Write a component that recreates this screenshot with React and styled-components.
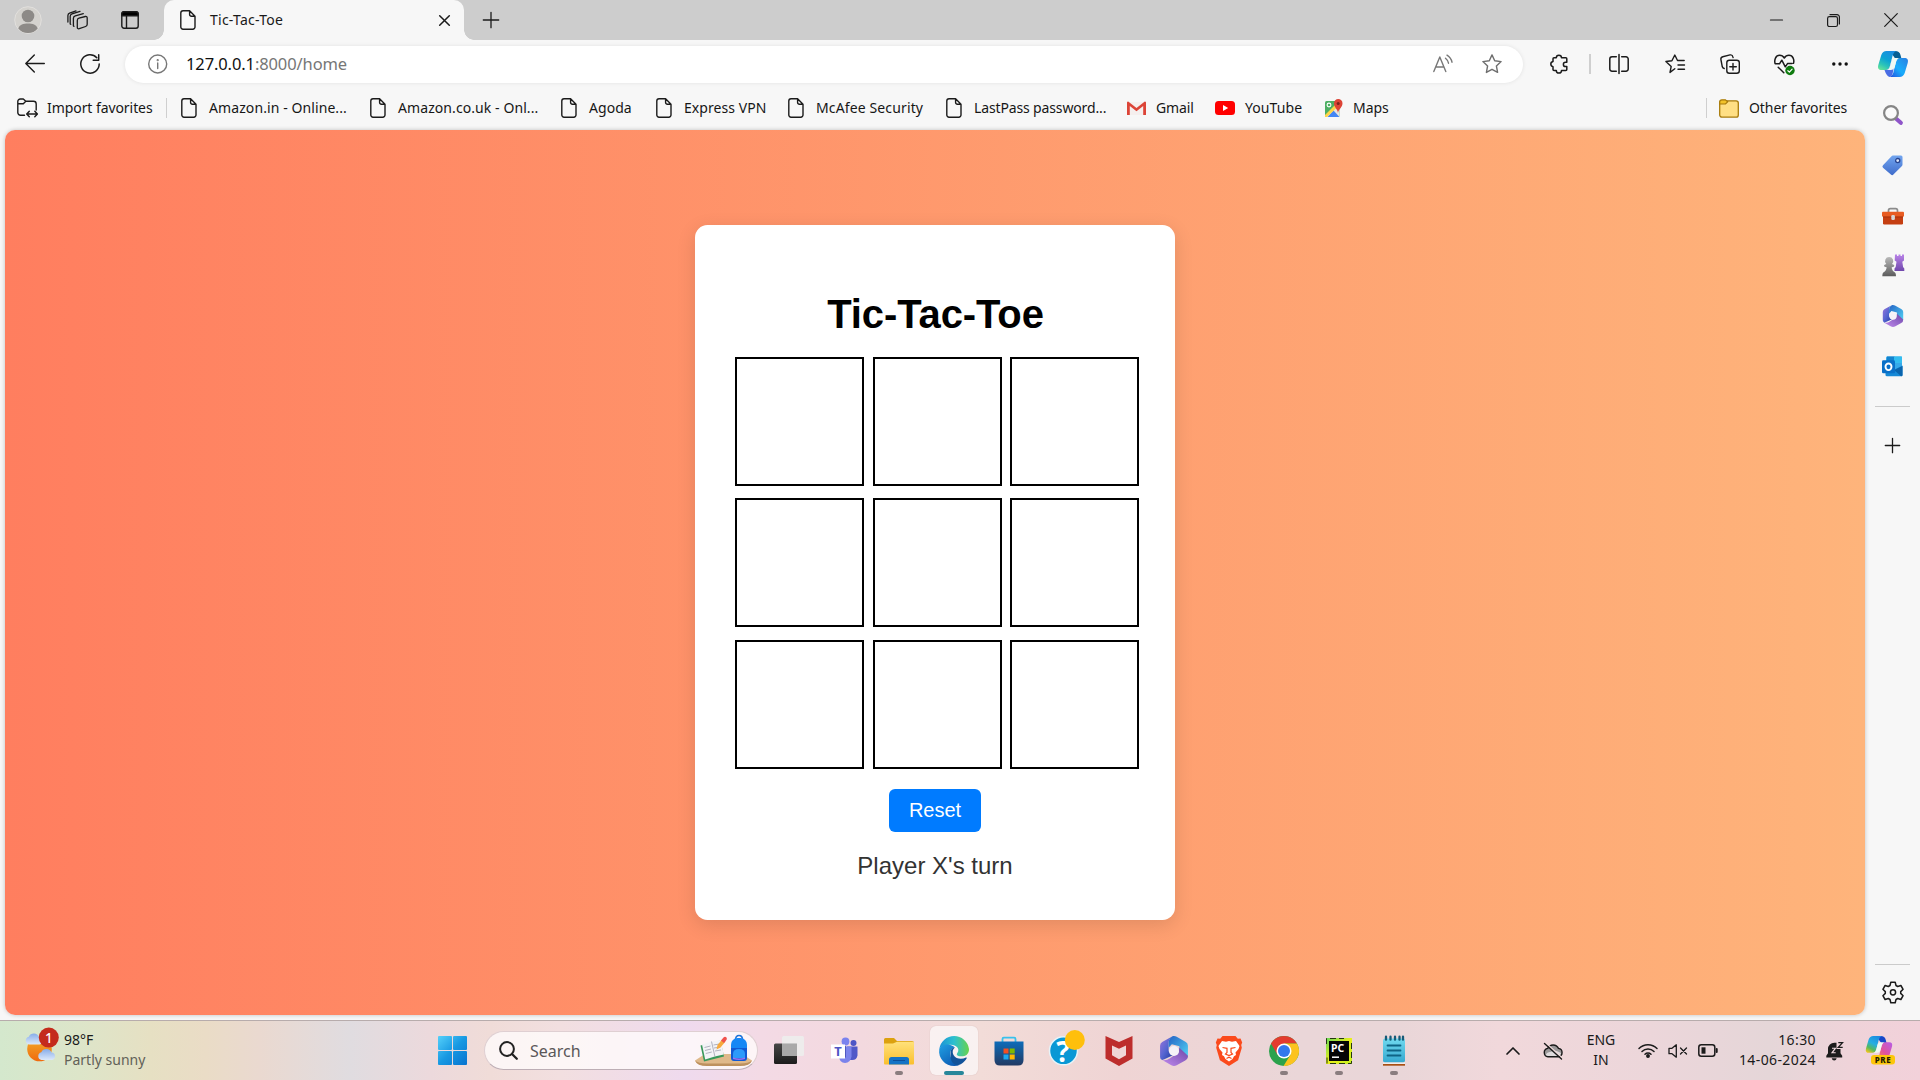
import React from "react";
import styled, { createGlobalStyle } from "styled-components";

const Global = createGlobalStyle`
  * { box-sizing: border-box; }
  body { margin: 0; overflow: hidden; font-family: "Noto Sans", "Open Sans", sans-serif; color: #1a1a1a; }
  svg { display: block; flex: none; overflow: visible; }
`;

/* ---------- layout parts ---------- */
const Desktop = styled.div`
  width: 1920px; height: 1080px; display: flex; flex-direction: column; background: #f7f7f7;
`;
const TabStrip = styled.header`
  height: 40px; flex: none; display: flex; align-items: center; background: #cdcdcd;
`;
const Slot = styled.div`
  width: ${(p) => p.$w}px; height: 100%; flex: none; display: flex; align-items: center; justify-content: center;
`;
const StripStart = styled.div`
  width: 164px; height: 100%; display: flex; padding-left: 2px;
`;
const Tab = styled.div`
  position: relative; width: 300px; height: 40px; display: flex; align-items: center; background: #f7f7f7;
  border-radius: 10px 10px 0 0; padding: 0 14px 0 16px;
  &::before, &::after {
    content: ""; position: absolute; bottom: 0; width: 10px; height: 10px;
  }
  &::before { left: -10px; background: radial-gradient(circle at 0 0, transparent 9.5px, #f7f7f7 10px); }
  &::after { right: -10px; background: radial-gradient(circle at 100% 0, transparent 9.5px, #f7f7f7 10px); }
`;
const TabTitle = styled.span`
  flex: 1; margin-left: 14px; font-size: 14px; letter-spacing: ${(p) => p.$ls || 0}px; line-height: 20px;
`;
const Spacer = styled.div`flex: 1;`;
const Body = styled.div`flex: 1; display: flex; min-height: 0;`;
const MainColumn = styled.div`
  width: 1866px; display: flex; flex-direction: column; padding: 0 1px 5px 5px;
`;
const Toolbar = styled.div`
  height: 48px; display: flex; align-items: center; margin-left: -5px;
`;
const NavButtons = styled.div`width: 125px; flex: none; height: 100%; display: flex; padding-left: 7px;`;
const AddressBar = styled.div`
  width: 1398px; flex: none; height: 37px; border-radius: 19px; background: #fff; display: flex; align-items: center;
  box-shadow: 0 0 4px rgba(0,0,0,.09); padding: 0 7px 0 8px;
`;
const Url = styled.div`
  flex: 1; font-size: 16.5px; letter-spacing: ${(p) => p.$ls}px; color: #767676; margin-left: 4px; line-height: 24px;
  b { font-weight: 400; color: #111; }
`;
const Tools = styled.div`display: flex; flex: none; height: 100%; padding-left: 9px;`;
const VLine = styled.i`width: 1.5px; height: 20px; background: #cfcfcf; flex: none;`;
const Favorites = styled.nav`
  height: 42px; display: flex; align-items: center; padding: 0 17px 2px 12px;
`;
const Favorite = styled.div`
  width: ${(p) => p.$w}px; flex: none; display: flex; align-items: center; gap: 10px;
  font-size: 14px; line-height: 20px; white-space: nowrap; color: #161616;
  span { letter-spacing: ${(p) => p.$ls || 0}px; }
`;
const IconBox = styled.div`
  width: 20px; height: 22px; flex: none; display: flex; align-items: center; justify-content: center;
`;
const Page = styled.main`
  flex: 1; display: flex; align-items: center; justify-content: center; border-radius: 10px;
  background: linear-gradient(to right, #ff7e5f, #feb47b); box-shadow: 0 0 4px rgba(0,0,0,.22);
  font-family: "Liberation Sans", Arial, sans-serif;
`;
const GameCard = styled.section`
  width: 480px; height: 695px; border-radius: 12.5px; background: #fff; padding: 66px 36px 0 40px;
  box-shadow: 0 5px 19px rgba(0,0,0,.12); display: flex; flex-direction: column; align-items: center;
`;
const GameTitle = styled.h1`
  margin: 0 0 20px -3px; font-size: 40px; line-height: 46px; font-weight: 700; letter-spacing: -.1px; color: #000;
`;
const Board = styled.div`
  display: grid; grid-template: repeat(3, 129px) / repeat(3, 129px); column-gap: 8.5px; row-gap: 12.4px;
`;
const Cell = styled.div`border: 2px solid #000;`;
const ResetButton = styled.button`
  margin: 20px 0 0 -4px; width: 92px; height: 43px; border: 0; border-radius: 6px; background: #007bff; color: #fff;
  font: 20px/23px "Liberation Sans", Arial, sans-serif; padding: 0;
`;
const Status = styled.p`margin: 20px 0 0 -4px; font-size: 24px; line-height: 28px; color: #333;`;

const Sidebar = styled.aside`
  width: 54px; display: flex; flex-direction: column; align-items: center; padding-right: 1px;
`;
const SideItem = styled.div`
  height: ${(p) => p.$h || 50.2}px; flex: none; display: flex; align-items: center; justify-content: center;
  padding-bottom: ${(p) => p.$lift || 0}px;
`;
const SideRule = styled.i`width: 35px; height: 1px; background: #cbcbcb; flex: none;`;

const Taskbar = styled.footer`
  height: 60px; flex: none; display: flex; border-top: 1px solid #b7acac;
  background: linear-gradient(to right, #d4e8cd 0, #dde5c9 80px, #e6e0c3 150px, #eadcc6 205px, #ead9d0 260px,
    #e0dce0 350px, #ecd9dc 430px, #f0dcd8 490px, #f2dfe0 560px, #efdaee 685px, #f3dae5 760px, #f3d9df 860px,
    #f2dcd8 980px, #efd4d4 1120px, #ead6d8 1300px, #e9d6d8 1400px, #f1d8db 1500px, #ecd6da 1650px,
    #e5d6d8 1770px, #efd3d9 1850px, #f2d1da 1920px);
`;
const Weather = styled.div`width: 438px; display: flex; padding-left: 24px;`;
const WeatherIcon = styled.div`width: 40px; padding-top: 4px;`;
const Lines = styled.div`
  display: flex; flex-direction: column; font-size: 14px; line-height: 20px; padding-top: 9px; white-space: nowrap;
  width: ${(p) => p.$w || "auto"}; align-items: ${(p) => p.$align || "flex-start"}; letter-spacing: ${(p) => p.$ls || 0}px;
  flex: none;
`;
const Muted = styled.span`color: #626158;`;
const SearchBox = styled.div`
  width: 274px; height: 39px; margin: 10px 0 0 17px; border-radius: 20px; background: rgba(255,251,251,.8);
  border: 1px solid #dfcfd2; border-bottom-color: #bdaeb5; display: flex; align-items: center; padding: 0 5px 0 14px;
  font-size: 16px; color: #5b5759; letter-spacing: 0;
  span { flex: 1; margin-left: 12px; }
`;
const Apps = styled.div`display: flex; width: 661px; margin-left: 3px;`;
const AppSlot = styled.div`
  width: 55px; flex: none; display: flex; flex-direction: column; align-items: center; padding-top: 5px;
`;
const Tile = styled.div`
  width: 48px; height: 49px; border-radius: 6px; display: flex; flex-direction: column; align-items: center;
  justify-content: flex-end; background: ${(p) => (p.$on ? "rgba(250,244,244,.85)" : "none")};
  box-shadow: ${(p) => (p.$on ? "0 0 1px rgba(120,90,90,.35)" : "none")};
`;
const Glyph = styled.div`width: 30px; height: 30px; margin-bottom: 5px;`;
const Mark = styled.i`
  width: ${(p) => (p.$s === "on" ? 20 : 8)}px; height: 4px; border-radius: 2px; flex: none;
  background: ${(p) => (p.$s === "on" ? "#27879a" : p.$s ? "#8a7d7f" : "transparent")};
`;
const Tray = styled.div`display: flex; flex: 1; padding-left: 71px;`;

/* ---------- icons ---------- */
const Svg = ({ w = 20, h = w, children, ...r }) => (
  <svg width={w} height={h} viewBox={`0 0 ${w} ${h}`} fill="none" stroke="none" {...r}>{children}</svg>
);
const Line = ({ w = 20, h, c = "#1b1b1b", sw = 1.4, children }) => (
  <Svg w={w} h={h || w} stroke={c} strokeWidth={sw} strokeLinecap="round" strokeLinejoin="round">{children}</Svg>
);
const Doc = () => (
  <Line w={16} h={20}><path d="M3 .8h6.6l5.4 5.4V17a2.2 2.2 0 0 1-2.2 2.2H3A2.2 2.2 0 0 1 .8 17V3A2.2 2.2 0 0 1 3 .8zM9.6 1v3.4a1.8 1.8 0 0 0 1.8 1.8H15" /></Line>
);
const Avatar = () => (
  <Svg w={28}><circle cx="14" cy="14" r="13.3" fill="#d4d2ce" stroke="#e2e0dd" /><circle cx="14" cy="10" r="6.3" fill="#8d8a87" /><path d="M4.3 22.5C5.5 18.500 9.500 17.500 14 17.500s8.500 1 9.700 5A12.500 12.500 0 0 1 14 27a12.500 12.500 0 0 1-9.700-4.500z" fill="#8d8a87" /></Svg>
);
const Workspaces = () => (
  <Line w={21} h={20} sw={1.3}><path d="M12 8.200l6.300-1.700q1.900-.4 1.900 1.500v6.300q0 1.700-1.600 2.200l-6.300 2.200q-2 .5-2-1.500v-6.700q0-1.800 1.700-2.300zM7 16.300l-.6-.3V8.300a2.600 2.600 0 0 1 1.900-2.500L16.300 3.600M3.700 14.300l-.5-.3V6.300a2.600 2.600 0 0 1 1.800-2.500L13 1.300M.9 12V5.500a2.600 2.600 0 0 1 1.700-2.300L9 .9" /></Line>
);
const TabActions = () => (
  <Line w={18}><rect x=".8" y=".8" width="16.4" height="16.400" rx="2.200" /><path d="M.8 4.800V3A2.200 2.200 0 0 1 3 .8h12a2.200 2.200 0 0 1 2.200 2.200v1.800z" fill="#000" /><path d="M5.500 5.500v11.500" /></Line>
);
const Cross = ({ s = 11, sw = 1.5 }) => <Line w={s} sw={sw}><path d={`M.7 .7L${s - 0.7} ${s - 0.7}M${s - 0.7} .7L.7 ${s - 0.7}`} /></Line>;
const Plus = ({ s = 16 }) => <Line w={s} sw={1.3}><path d={`M${s / 2} .3v${s - 0.6}M.3 ${s / 2}h${s - 0.6}`} /></Line>;
const Minimize = () => <Line w={13} h={13} sw={1.2}><path d="M.5 6h12" /></Line>;
const Restore = () => <Line w={13} sw={1.2}><rect x=".6" y="2.600" width="9.900" height="9.900" rx="1.800" /><path d="M3 .6h7a2.400 2.400 0 0 1 2.400 2.400v7" /></Line>;
const Back = () => <Line w={20} sw={1.4}><path d="M19.300 9.500H1M9.300 1L.8 9.500l8.500 8.500" /></Line>;
const Refresh = () => <Line w={20} sw={1.5}><path d="M19.200 10A9.200 9.200 0 1 1 16.800 3.800M18.700 .8v5.500h-5.500" /></Line>;
const Info = () => <Line w={20} c="#777" sw={1.4}><circle cx="9.700" cy="10" r="9" /><path d="M9.700 9v5.500" /><circle cx="9.700" cy="6.200" r=".4" fill="#777" /></Line>;
const ReadAloud = () => <Line w={20} c="#777" sw={1.4}><path d="M.8 17.500L6.800 3l6 14.500M2.800 13h8M12.500 4.200a8 8 0 0 1 3 5M14 1.200a11 11 0 0 1 5 7" /></Line>;
const starPath = "M10 .9l2.700 5.900 6.400.8-4.700 4.400 1.200 6.400L10 15.300l-5.600 3.100 1.200-6.400L.9 7.600l6.400-.8z";
const StarIcon = () => <Line w={20} c="#6f6f6f" sw={1.4}><path d={starPath} /></Line>;
const Puzzle = () => <Line w={20} sw={1.500}><path d="M5 3.800h2.300a2.600 2.600 0 0 1 5.200 0h4.300q1 0 1 1v3.500h-1.300a2.100 2.100 0 0 0 0 4.200h1.300v3q0 1-1 1h-4.300a2.600 2.600 0 0 1-5.200 0H5q-1 0-1-1v-2.800a2.700 2.700 0 0 1 0-5.300V4.800q0-1 1-1z" /></Line>;
const Split = () => <Line w={20} sw={1.500}><path d="M7.300 2.800H3A2.200 2.200 0 0 0 .8 5v10A2.200 2.200 0 0 0 3 17.200h4.300M12.700 2.800H17A2.200 2.200 0 0 1 19.200 5v10a2.200 2.200 0 0 1-2.200 2.200h-4.300M10 .5v19" /></Line>;
const FavList = () => <Line w={20} sw={1.400}><path d="M9.800 14.700L5 18.400l1.200-6L.9 7.500l6-.8L9.800 1l2.700 5.500h6.700M13 11h6.500M13 15.300h6.500" /></Line>;
const Collections = () => <Line w={20} sw={1.400}><rect x="6.800" y="6.200" width="12.500" height="13" rx="2.500" /><path d="M13 9.500v6.500M9.800 12.700h6.500M4.200 14.500a2.500 2.500 0 0 1-1.900-1.700L.9 5.500A2.500 2.500 0 0 1 2.800 2.700L10 .9a2.500 2.500 0 0 1 2.900 2l.2.600" /></Line>;
const Heart = () => (
  <Line w={21} h={21} sw={1.500}><path d="M1 9.300C.2 6 1.500 1.300 5.600 1.300c2.300 0 3.800 1.200 4.700 2.700.9-1.500 2.400-2.700 4.700-2.700 4.100 0 5.500 4.700 4.500 8M1.200 9.800h4.300l2.300-3.600 3.500 6.600 2.200-3.200H18M4.200 13.200l5.600 5.600" /><circle cx="16" cy="16.500" r="4.700" fill="#0f7b0f" stroke="none" /><path d="M13.900 16.700l1.500 1.400 2.700-3" stroke="#fff" strokeWidth="1.200" /></Line>
);
const Dots = () => <Svg w={18} h={4} fill="#111"><circle cx="2.800" cy="2" r="1.700" /><circle cx="9" cy="2" r="1.700" /><circle cx="15.200" cy="2" r="1.700" /></Svg>;
const ImportFolder = () => <Line w={21} h={20} sw={1.400}><path d="M7.500 17.200H3.500A2.700 2.700 0 0 1 .8 14.500v-11A2.500 2.500 0 0 1 3.300 1h3l2.500 2.300h7.700a2.700 2.700 0 0 1 2.700 2.700v6M.8 5.800h5.500l2.500-2.500M10 16h10M12.300 13.200L9.700 16l2.600 2.800M17.800 13.200l2.600 2.800-2.600 2.800" /></Line>;
const Gmail = () => <Svg w={19} h={15}><path d="M1 1h17v13H1z" fill="#f5efee" /><path d="M0 1.500Q0 .5 1.200 .5L9.500 7 17.800 .5Q19 .5 19 1.500V14h-2.800V5L9.500 10.300 2.800 5v9H0z" fill="#dc4437" /></Svg>;
const YouTube = () => <Svg w={20} h={14}><rect width="20" height="14" rx="3.500" fill="#f00" /><path d="M8 4v6l5.200-3z" fill="#fff" /></Svg>;
const Maps = () => <Svg w={19} h={18}><rect x="1" y="2" width="14.500" height="16" rx="1.500" fill="#4cae62" /><path d="M1 17L15.500 3v15H2z" fill="#e9e5df" /><path d="M3.500 18L9.500 11.500 15.500 18z" fill="#4486f4" /><path d="M1 16L12.500 4.500l2 2.500L3 18H1z" fill="#fdd548" /><circle cx="5" cy="6" r="1.900" stroke="#fff" strokeWidth="1.100" /><path d="M14 14C13.600 10 10 8.500 10 4.300a4.200 4.200 0 0 1 8.500 0C18.500 8.500 14.600 10 14 14z" fill="#dc4335" /><circle cx="14.200" cy="4.400" r="1.500" fill="#7b231e" /></Svg>;
const Folder = () => <Svg w={20} h={19}><rect x=".7" y="1.800" width="18.600" height="16.300" rx="2.200" fill="#ffdf84" stroke="#a87b0b" strokeWidth="1.300" /><path d="M.7 5V3A2.200 2.200 0 0 1 2.900 .8h3.500L8.700 2.800 6.500 5z" fill="#f2c229" stroke="#a87b0b" strokeWidth="1.200" /></Svg>;

const Copilot = ({ w = 30, h = 26, pre }) => (
  <svg width={w} height={h} viewBox="0 0 30 26" fill="none">
    <defs>
      <linearGradient id={pre ? "ca1" : "ca"} x1=".7" y1="0" x2=".2" y2="1"><stop stopColor="#1b8ce0" /><stop offset=".45" stopColor={pre ? "#25aee2" : "#0ca3d4"} /><stop offset=".75" stopColor={pre ? "#54b95e" : "#2cc4b8"} /><stop offset="1" stopColor={pre ? "#e9c51f" : "#63e29a"} /></linearGradient>
      <linearGradient id={pre ? "cb1" : "cb"} x1="1" y1="0" x2="0" y2="1"><stop stopColor={pre ? "#b65ee8" : "#2b7ee0"} /><stop offset=".55" stopColor={pre ? "#e0529c" : "#18aefc"} /><stop offset="1" stopColor={pre ? "#f6914a" : "#2250df"} /></linearGradient>
    </defs>
    <path d="M17 0q4.600 0 5.500 4l1 4h-6l-5-7z" fill={pre ? "#1746c8" : "#075f93"} />
    <path d="M8.500 0H18q-2.500 1.300-3.300 4.200L12 15q-1 4-4.300 4H3.500C.7 19-.6 17.300.3 14L3.300 4Q4.700 0 8.500 0z" fill={`url(#${pre ? "ca1" : "ca"})`} />
    <path d="M21.500 26H12q2.500-1.300 3.300-4.200L18 11q1-4 4.300-4h4.200c2.800 0 4.100 1.700 3.200 5l-3 10q-1.400 4-5.200 4z" fill={`url(#${pre ? "cb1" : "cb"})`} />
    {!pre && <path d="M6.500 19h1.200q3.300 0 4.300-4l1.600-6H17l-2 12q-1 4.800-3.500 5Q8.500 25 6.500 19z" fill="#2b55e0" opacity=".85" />}
    <path d="M16.500 7h5q-2.700.5-3.500 4l-1.300 5q-1 3-4 3h-4q2.500-.5 3.300-4l1.300-5q.8-3 3.200-3z" fill="#effaf4" />
  </svg>
);
const SideSearch = () => <Svg w={20}><path d="M13.500 14l4.300 3.800" stroke="#8f55c9" strokeWidth="4.200" strokeLinecap="round" /><circle cx="8" cy="8" r="6.900" stroke="#858585" strokeWidth="2.200" fill="#fafafa" /></Svg>;
const Tag = () => <Svg w={21}><defs><linearGradient id="tg" x2="0" y2="1"><stop stopColor="#72a5ef" /><stop offset="1" stopColor="#3f6ccb" /></linearGradient></defs><path d="M11 .5h8q1.500 0 1.500 1.500v7.500q0 1-.8 1.800l-8.300 8.300q-1.200 1.200-2.500 0L1 12.700q-1.200-1.300 0-2.500L9.300 1.500q.7-1 1.700-1z" fill="url(#tg)" /><circle cx="15.700" cy="5.600" r="2.100" fill="#dce7fb" stroke="#27438f" strokeWidth="1.300" /></Svg>;
const Toolbox = () => <Svg w={22} h={18}><g transform="translate(0 1.500)"><path d="M6.500 5V3q0-1.800 1.800-1.800h5.400Q15.500 1.200 15.500 3v2" stroke="#8b8b8b" strokeWidth="1.700" /><rect x="1" y="6" width="20" height="11" rx="1.200" fill="#c53f12" /><rect x="0" y="4.200" width="22" height="5" rx="1" fill="#e85c22" /><path d="M1 9h20v1H1z" fill="#a7320d" /><rect x="9.300" y="7.500" width="3.600" height="5" rx="1.200" fill="#d6d6d6" /></g></Svg>;
const Chess = () => <Svg w={22} h={23}><defs><linearGradient id="pw" x2="0" y2="1"><stop stopColor="#b9b9b9" /><stop offset="1" stopColor="#5c5c5c" /></linearGradient><linearGradient id="rk" x2="0" y2="1"><stop stopColor="#b983e8" /><stop offset="1" stopColor="#7048ac" /></linearGradient></defs><path d="M13 .5h2v1.500h1.500V.5h2v1.500H20V.5h2v6l-1.700 1.300.8 5.200 1.200 1.500V17h-9.800v-2.500l1.200-1.500.8-5.200L12.700 6.500z" fill="url(#rk)" /><path d="M7.200 3a4 4 0 0 1 2.800 6.900l1.700.8q1.300 1.200 0 2l-2 .6q0 3.300 3.300 5.200 1 .7 1 3.800H.3q0-3.100 1-3.800 3.300-1.900 3.300-5.200l-2-.6q-1.300-.8 0-2l1.700-.8A4 4 0 0 1 7.200 3z" fill="url(#pw)" /></Svg>;
const M365 = ({ s = 22, id }) => (
  <svg width={s} height={s} viewBox="0 0 26 28" fill="none">
    <defs><linearGradient id={id + "a"} x2="1" y2="1"><stop stopColor="#9d72d9" /><stop offset=".5" stopColor="#5766d2" /><stop offset="1" stopColor="#1f3a9f" /></linearGradient><linearGradient id={id + "b"} x2="1" y2="1"><stop stopColor="#2563c5" /><stop offset="1" stopColor="#52d4f5" /></linearGradient><linearGradient id={id + "c"} x1="1" y1="0" x2="0" y2="1"><stop stopColor="#6d47a9" /><stop offset="1" stopColor="#c18bed" /></linearGradient></defs>
    <path d="M12 0L2 5.500Q0 6.700 0 9v10.500q0 2 2 3L4 21.600l8-3.600-4-3.700V6.800Q8 2 12 0z" fill={`url(#${id}a)`} />
    <path d="M12 0q2-.3 3.500.6L24 5.500q2 1.200 2 3.500v9.500q0 .8-.4 1.500L18 15V9.500L11 7.700 8 11V6.500Q8 2 12 0z" fill={`url(#${id}b)`} />
    <path d="M2 22.500q4 .8 7-1.500l8-5.500 1-4.500 8 7.500q.2 3-2.500 4.300l-8 4.600q-2.500 1.200-5 0z" fill={`url(#${id}c)`} />
    <circle cx="13" cy="14" r="4.700" fill="#f6f2f8" />
  </svg>
);
const Outlook = () => <Svg w={21}><rect x="4" y=".5" width="16" height="13" rx="1.200" fill="#36a9ea" /><path d="M5 .5h7.500V7H5z" fill="#1384cf" /><path d="M12 .5h8V7h-8z" fill="#33bdf0" /><path d="M3.500 9.500L12 14l8.500-4.500V19q0 1.300-1.300 1.300H5q-1.500 0-1.500-1.300z" fill="#1689d6" /><path d="M20.500 10v9q0 1.300-1.300 1.300L12 14z" fill="#0a64ad" /><rect x="0" y="4.300" width="13" height="13" rx="1.300" fill="#0a70c8" /><ellipse cx="6.500" cy="10.800" rx="3" ry="3.300" stroke="#fff" strokeWidth="1.900" /></Svg>;
const Gear = () => <Line w={22} sw={1.500}><path d="M8.800 1.200h4.400l.8 3.300 1.700 1 3.200-1 2.200 3.800-2.400 2.300v1.800l2.400 2.300-2.200 3.800-3.200-1-1.700 1-.8 3.300H8.800L8 18.500l-1.700-1-3.200 1-2.200-3.800 2.400-2.300v-1.800L.9 8.300l2.200-3.800 3.200 1 1.700-1z" /><circle cx="11" cy="11.300" r="2.600" /></Line>;

const cloud = "M4 12a4 4 0 0 1-.2-7.800A5.500 5.500 0 0 1 14 4.500 3.800 3.800 0 0 1 14.500 12z";
const WeatherArt = () => (
  <Svg w={36} h={38}><defs><linearGradient id="sun" x2="0" y2="1"><stop stopColor="#f3ae2c" /><stop offset="1" stopColor="#f06a0d" /></linearGradient><linearGradient id="cl" x2="0" y2="1"><stop stopColor="#86ace9" /><stop offset="1" stopColor="#dce9fb" /></linearGradient></defs>
    <circle cx="15.500" cy="24" r="12.300" fill="url(#sun)" /><path d={cloud} transform="translate(1 7.500)" fill="url(#cl)" /><path d={cloud} transform="translate(13.500 23)" fill="url(#cl)" />
    <circle cx="24.800" cy="12.600" r="10" fill="#c42b1c" /><text x="24.800" y="17.600" fontSize="13.500" textAnchor="middle" fill="#fff" fontFamily="Noto Sans" fontWeight="500">1</text></Svg>
);
const StartIcon = () => <Svg w={29}><defs><linearGradient id="st" gradientUnits="userSpaceOnUse" x2="29" y2="29"><stop stopColor="#55d0fa" /><stop offset=".5" stopColor="#1798e2" /><stop offset="1" stopColor="#0873cf" /></linearGradient></defs><g fill="url(#st)"><rect width="14" height="14" rx="1" /><rect x="15" width="14" height="14" rx="1" /><rect y="15" width="14" height="14" rx="1" /><rect x="15" y="15" width="14" height="14" rx="1" /></g></Svg>;
const SearchIcon = () => <Svg w={19}><circle cx="8" cy="8" r="6.900" stroke="#222" strokeWidth="2" /><path d="M13 13l4.800 4.800" stroke="#222" strokeWidth="2.300" strokeLinecap="round" /></Svg>;
const StudyArt = () => (
  <Svg w={57} h={32}><path d="M0 25.500l10-6.500h37l10 6.500q-2 5-12 5H12Q2 30.500 0 25.500z" fill="#dfb98b" /><path d="M0 25.500q3 3 12 3h33q9 0 12-3-2 5.500-12 5.500H12Q2 31 0 25.500z" fill="#bd915f" />
    <path d="M5.500 10.500l20-5 3.500 16L9 26.500z" fill="#38985a" /><path d="M7 9.500l9.500-3 9.500-1.500 2.700 14.500-9 2-9.500 3z" fill="#f3f3f6" /><path d="M16.500 6.500l3.400 15M9.500 12.500l6-1.500M10 15.500l6-1.500M10.800 18.500l6-1.500M18.500 10l6-1M19 13l6-1M20 16l6-1" stroke="#a9aab8" strokeWidth=".9" />
    <path d="M21.500 14.500l1-4.500 5-6 3 2.500-5 6z" fill="#f6a93d" /><path d="M26 5.500l2.500-3q1.500-1.500 3 0 1 1.500-.3 2.700L29 8z" fill="#f0524d" />
    <path d="M40.500 5q0-4.500 3.500-4.500T47.500 5" stroke="#1e74d8" strokeWidth="1.600" /><rect x="36" y="3" width="16" height="23" rx="6.500" fill="#1687f5" /><path d="M36 13h16v10q0 3-3 3H39q-3 0-3-3z" fill="#1159d4" /><path d="M38 19q0-5 6-5t6 5v4H38z" fill="#2d9afa" /><path d="M38 22.500q6 2 12 0v1.500q-6 2-12 0z" fill="#9c6ff0" /></Svg>
);
const TaskView = () => <Svg w={30} h={28}><defs><linearGradient id="tv" x2="0" y2="1"><stop stopColor="#464646" /><stop offset="1" stopColor="#1c1c1c" /></linearGradient></defs><rect x="0" y="7.500" width="23" height="20.500" rx="1.500" fill="url(#tv)" /><rect x="8" y="0" width="22" height="20" rx="1.500" fill="#ededed" opacity=".93" /><rect x="8" y="7.500" width="15" height="12.500" fill="#a9a9a9" /></Svg>;
const Teams = () => <Svg w={30}><circle cx="24.500" cy="7" r="3" fill="#4d55c6" /><path d="M18 10.500h10.500v9q-1 5-6 4.500h-4z" fill="#5058c8" /><circle cx="16.500" cy="5.500" r="3.900" fill="#7a82ee" /><path d="M10 10.500h12.500v10q-1 6.500-6.500 6.500T10 20.500z" fill="#7b83eb" /><path d="M10 10h7v11.500h-6.500z" fill="#454db5" opacity=".8" /><rect x="2" y="8.500" width="14" height="14" fill="#fff" /><text x="9.100" y="20.200" fontFamily="Noto Sans" fontWeight="700" fontSize="13" textAnchor="middle" fill="#4f57c4">T</text></Svg>;
const Explorer = () => <Svg w={30}><defs><linearGradient id="ex" x2="0" y2="1"><stop stopColor="#ffe17b" /><stop offset="1" stopColor="#fabf2d" /></linearGradient></defs><path d="M0 3.500Q0 2 1.500 2h8.500l3 3h15q2 0 2 2v5H0z" fill="#dca10f" /><path d="M0 7.500h9l4-1.700h16q1 0 1 1V27.500q0 1-1 1H1q-1 0-1-1z" fill="url(#ex)" /><path d="M5 28.500v-5q0-2.500 2.500-2.500h15q2.500 0 2.500 2.500v5z" fill="#1473c5" /><path d="M9 24.500h12" stroke="#0c4f99" /></Svg>;
const Edge = () => <Svg w={30}><defs><linearGradient id="e1" x2="1"><stop stopColor="#1b92d5" /><stop offset=".5" stopColor="#2dc0cf" /><stop offset="1" stopColor="#68d34c" /></linearGradient><linearGradient id="e2" x2=".7" y2="1"><stop stopColor="#20a0e3" /><stop offset="1" stopColor="#0d5bb4" /></linearGradient></defs><path d="M.3 13A15 15 0 0 1 30 13c.3 5.500-4 7.500-8 7.300-4 0-5-1.700-3.500-3.500 3-4.500-2-8.600-7.500-8.100C5.500 9 1 10.500.3 13z" fill="url(#e1)" /><path d="M.3 13C1.500 9 7 7.800 10.500 8.800c3.500.7 5 2.500 5 2.500-4 1.500-5.500 6-3.500 10.500 1.500 4 5.500 7.300 8.500 7.300C10 33-1.500 24.500.3 13z" fill="url(#e2)" /><path d="M11.500 17.500c0-4 2-6 4.500-6.200-2.500 2-3 5-1.500 7.700C17 23 22.500 24 27 21.500q1-.3.700.8C25 27 20.800 29 18.500 29.300c-6-.8-7.500-7-7-11.800z" fill="#12539a" /></Svg>;
const Store = () => <Svg w={30}><defs><linearGradient id="ms" x2="0" y2="1"><stop stopColor="#0d6cb9" /><stop offset="1" stopColor="#223a63" /></linearGradient></defs><path d="M8.500 7V3q0-1.300 1.300-1.300h10.400Q21.500 1.700 21.500 3v4" stroke="#37c1ed" strokeWidth="1.800" /><path d="M.5 5.500h29V24q0 5.500-5.500 5.500H6Q.5 29.500.5 24z" fill="url(#ms)" /><path d="M9.500 12.500h5v5h-5z" fill="#f25022" /><path d="M15.700 12.500h5v5h-5z" fill="#7fba00" /><path d="M9.500 18.500h5v5h-5z" fill="#1ba9f0" /><path d="M15.700 18.500h5v5h-5z" fill="#ffb900" /></Svg>;
const Help = () => <Svg w={30}><circle cx="14.500" cy="14.800" r="14" fill="#0a98d5" stroke="#e7f3f8" strokeWidth="1.500" /><text x="14" y="25.500" fontFamily="Noto Sans" fontWeight="700" fontSize="28" textAnchor="middle" fill="#fff">?</text><circle cx="25.800" cy="4" r="10" fill="#ffbf0c" /></Svg>;
const McAfee = () => <Svg w={30}><path d="M1.500 0L15 6 28.500 0v22.500L15 30 1.500 22.500z" fill="#bd2d2c" /><path d="M8 9.500l7 3.200 7-3.200v9.800l-7 4-7-4z" fill="#efd6d6" /></Svg>;
const Brave = () => <Svg w={30}><path d="M8.500 0h13l2.300 2.800 2.700-.2 1.700 4-1 2.500.6 2.700-3.700 12.500L15 30 5.900 24.300 2.200 11.800l.6-2.700-1-2.500 1.700-4 2.700.2z" fill="#fb4a1c" /><path d="M15 5l3 .8 4-.8 3.500 5-1 3-3 3.500.5 2.500-2 1.300-1.500 2.700-3.500 2.500-3.500-2.500-1.500-2.700-2-1.300.5-2.500-3-3.500-1-3L8 5l4 .8z" fill="#fff" /><path d="M8.500 11.500l4.500.8v4.200l-1.500 1.500 3.500 1.500 3.500-1.500-1.500-1.500v-4.200l4.500-.8M12.500 22.500l2.500-1.300 2.500 1.300" stroke="#fb4a1c" strokeWidth="1.200" /></Svg>;
const Chrome = () => <Svg w={30}><circle cx="15" cy="15" r="15" fill="#2ba24c" /><path d="M2 7.500A15 15 0 0 1 28 7.500H15L8.500 18.700z" fill="#e33b2e" /><path d="M28 7.500A15 15 0 0 1 14.500 30l7-11.300L15 7.500z" fill="#fcc31e" /><circle cx="15" cy="15" r="7.500" fill="#fff" /><circle cx="15" cy="15" r="6" fill="#3278ec" /></Svg>;
const PyCharm = () => <Svg w={30}><defs><linearGradient id="pc" x2="1" y2="1"><stop stopColor="#67d95a" /><stop offset=".5" stopColor="#e9f01c" /><stop offset="1" stopColor="#c5ef22" /></linearGradient></defs><rect x="2" y="2" width="26" height="26" fill="url(#pc)" /><path d="M2.500 8V2.500H20M27.500 7v20.500H3V20" stroke="#25380f" strokeDasharray="6 3" /><rect x="5" y="5" width="20" height="20" fill="#050505" /><text x="7" y="15.500" fontFamily="Noto Sans" fontWeight="700" fontSize="10.500" fill="#fff">PC</text><path d="M8 21.200h7" stroke="#fff" strokeWidth="1.500" /></Svg>;
const Notepad = () => <Svg w={30}><defs><linearGradient id="np" x2="0" y2="1"><stop stopColor="#70d9ef" /><stop offset="1" stopColor="#36a9d0" /></linearGradient></defs><rect x="4" y="2.500" width="22" height="24" rx="2" fill="url(#np)" /><path d="M4 26.500h22v1.500H4z" fill="#eee" /><path d="M4 28h22v1.700H4z" fill="#a94f13" /><path d="M7 .7v3M11.500 .7v3M16 .7v3M20.500 .7v3M24 .7v3" stroke="#155b78" strokeWidth="2.300" strokeLinecap="round" /><path d="M8.500 9.500h13M8.500 14.500h13M8.500 19.500h13" stroke="#0f6485" strokeWidth="1.800" strokeLinecap="round" /></Svg>;
const Chevron = () => <Line w={14} h={8} sw={1.700}><path d="M1 7l6-6 6 6" /></Line>;
const CloudOff = () => <Line w={20} h={18} sw={1.400}><path d="M5 14.700a4.200 4.200 0 0 1-.3-8.300 6 6 0 0 1 10.800 0 4.200 4.200 0 0 1 0 8.300z" fill="#9a9899" /><path d="M2.500 13c2-3.500 5-2.500 7-4 3-1 6 .5 8.500 2-.5 2.200-1.700 2.900-3 2.900H5z" fill="#dedbdd" stroke="none" /><path d="M2.700 .8l17 15.500" stroke="#f0dada" strokeWidth="1.200" /><path d="M1.500 1.500l17 15.500" /></Line>;
const Wifi = () => <Line w={20} h={15} sw={1.500}><path d="M1 5.500a12.700 12.700 0 0 1 18 0M4 8.500a8.500 8.500 0 0 1 12 0M7 11.300a4.300 4.300 0 0 1 6 0" /><circle cx="10" cy="13" r="1.200" fill="#1b1b1b" /></Line>;
const Mute = () => <Line w={20} h={14} sw={1.300}><path d="M1 4.300h3L8.300 .8v12.400L4 9.700H1zM12.500 4l6 6M18.500 4l-6 6" /></Line>;
const Battery = () => <Line w={20} h={13} sw={1.500}><rect x=".8" y=".8" width="16" height="11.400" rx="2.500" /><rect x="3.500" y="3.300" width="4" height="6.400" fill="#1b1b1b" stroke="none" /><path d="M18.700 5v3" strokeWidth="2" /></Line>;
const Bell = () => <Svg w={18} h={20}><path d="M.3 16.500v-1.800l1.700-2.500V8A6.300 6.300 0 0 1 8.300 1.700H10.500v6.300h4v4.200l1.700 2.500v1.800z" fill="#1c1c1c" /><path d="M5.700 17.200h5q-.5 2.300-2.500 2.300t-2.500-2.300z" fill="#1c1c1c" /><path d="M6 7.200h3.500L6 11.800h3.700" stroke="#efdadf" strokeWidth="1.100" /><path d="M12.300 1.700h4.200l-4.200 4.600h4.400" stroke="#1c1c1c" strokeWidth="1.300" /></Svg>;
const CopilotPre = () => <Svg w={30} h={29}><Copilot w={28} h={23} pre /><rect x="6" y="19" width="24" height="9.500" rx="3" fill="#fcc60b" /><text x="18" y="26.600" fontFamily="Noto Sans" fontWeight="800" fontSize="8" letterSpacing=".5" textAnchor="middle" fill="#221b00">PRE</text></Svg>;

/* ---------- data ---------- */
const favorites = [
  { label: "Import favorites", icon: <ImportFolder />, w: 143, ls: -0.07 },
  { label: "Amazon.in - Online...", icon: <Doc />, w: 189, ls: 0.09, line: true },
  { label: "Amazon.co.uk - Onl...", icon: <Doc />, w: 191, ls: 0.08 },
  { label: "Agoda", icon: <Doc />, w: 95, ls: 0.05 },
  { label: "Express VPN", icon: <Doc />, w: 132, ls: 0.06 },
  { label: "McAfee Security", icon: <Doc />, w: 158, ls: 0.13 },
  { label: "LastPass password...", icon: <Doc />, w: 182, ls: -0.14 },
  { label: "Gmail", icon: <Gmail />, w: 89, ls: -0.1 },
  { label: "YouTube", icon: <YouTube />, w: 108, ls: 0.08 },
  { label: "Maps", icon: <Maps />, w: 80, ls: -0.05 },
];
const toolIcons = [<FavList />, <Collections />, <Heart />, <Dots />];
const sideIcons = [<SideSearch />, <Tag />, <Toolbox />, <Chess />, <M365 id="s" />, <Outlook />];
const apps = [
  { icon: <TaskView /> }, { icon: <Teams /> }, { icon: <Explorer />, state: "open" }, { icon: <Edge />, state: "on" },
  { icon: <Store /> }, { icon: <Help /> }, { icon: <McAfee /> }, { icon: <M365 s={30} id="t" /> }, { icon: <Brave /> },
  { icon: <Chrome />, state: "open" }, { icon: <PyCharm />, state: "open" }, { icon: <Notepad />, state: "open" },
];

export default function App() {
  return (
    <Desktop>
      <Global />
      <TabStrip>
        <StripStart>
          <Slot $w={52}><Avatar /></Slot>
          <Slot $w={46}><Workspaces /></Slot>
          <Slot $w={60}><TabActions /></Slot>
        </StripStart>
        <Tab>
          <Doc />
          <TabTitle $ls={0.25}>Tic-Tac-Toe</TabTitle>
          <Cross />
        </Tab>
        <Slot $w={54}><Plus /></Slot>
        <Spacer />
        <Slot $w={57}><Minimize /></Slot>
        <Slot $w={57}><Restore /></Slot>
        <Slot $w={58}><Cross s={14} sw={1.2} /></Slot>
      </TabStrip>
      <Body>
        <MainColumn>
          <Toolbar>
            <NavButtons>
              <Slot $w={55}><Back /></Slot>
              <Slot $w={55}><Refresh /></Slot>
            </NavButtons>
            <AddressBar>
              <Slot $w={49}><Info /></Slot>
              <Url $ls={-0.11}><b>127.0.0.1</b>:8000/home</Url>
              <Slot $w={49}><ReadAloud /></Slot>
              <Slot $w={49}><StarIcon /></Slot>
            </AddressBar>
            <Tools>
              <Slot $w={54}><Puzzle /></Slot>
              <Slot $w={8}><VLine /></Slot>
              <Slot $w={50}><Split /></Slot>
              <Slot $w={3} />
              {toolIcons.map((icon, i) => <Slot key={i} $w={55.2}>{icon}</Slot>)}
            </Tools>
          </Toolbar>
          <Favorites>
            {favorites.map((f) => (
              <React.Fragment key={f.label}>
                {f.line && <><Slot $w={13}><VLine /></Slot><Slot $w={6} /></>}
                <Favorite $w={f.w} $ls={f.ls}><IconBox>{f.icon}</IconBox><span>{f.label}</span></Favorite>
              </React.Fragment>
            ))}
            <Spacer />
            <Slot $w={13}><VLine /></Slot>
            <Slot $w={6} />
            <Favorite $w={129} $ls={-0.07}><IconBox><Folder /></IconBox><span>Other favorites</span></Favorite>
          </Favorites>
          <Page>
            <GameCard>
              <GameTitle>Tic-Tac-Toe</GameTitle>
              <Board>{Array.from({ length: 9 }, (_, i) => <Cell key={i} />)}</Board>
              <ResetButton>Reset</ResetButton>
              <Status>Player X's turn</Status>
            </GameCard>
          </Page>
        </MainColumn>
        <Sidebar>
          <SideItem $h={50} $lift={2}><Copilot /></SideItem>
          {sideIcons.map((icon, i) => <SideItem key={i}>{icon}</SideItem>)}
          <SideItem $h={31}><SideRule /></SideItem>
          <SideItem $h={48} $lift={1}><Plus s={15} /></SideItem>
          <Spacer />
          <SideRule />
          <SideItem $h={55} $lift={2}><Gear /></SideItem>
        </Sidebar>
      </Body>
      <Taskbar>
        <Weather>
          <WeatherIcon><WeatherArt /></WeatherIcon>
          <Lines><span>98°F</span><Muted>Partly sunny</Muted></Lines>
        </Weather>
        <Slot $w={29}><StartIcon /></Slot>
        <SearchBox><SearchIcon /><span>Search</span><StudyArt /></SearchBox>
        <Apps>
          {apps.map((a, i) => (
            <AppSlot key={i}><Tile $on={a.state === "on"}><Glyph>{a.icon}</Glyph><Mark $s={a.state} /></Tile></AppSlot>
          ))}
        </Apps>
        <Tray>
          <Slot $w={40}><Chevron /></Slot>
          <Slot $w={40}><CloudOff /></Slot>
          <Lines $w="56px" $align="center"><span>ENG</span><span>IN</span></Lines>
          <Slot $w={38}><Wifi /></Slot>
          <Slot $w={22}><Mute /></Slot>
          <Slot $w={38}><Battery /></Slot>
          <Lines $w="89px" $align="flex-end" $ls={0.4}><span>16:30</span><span>14-06-2024</span></Lines>
          <Slot $w={38}><Bell /></Slot>
          <Slot $w={52}><CopilotPre /></Slot>
        </Tray>
      </Taskbar>
    </Desktop>
  );
}
